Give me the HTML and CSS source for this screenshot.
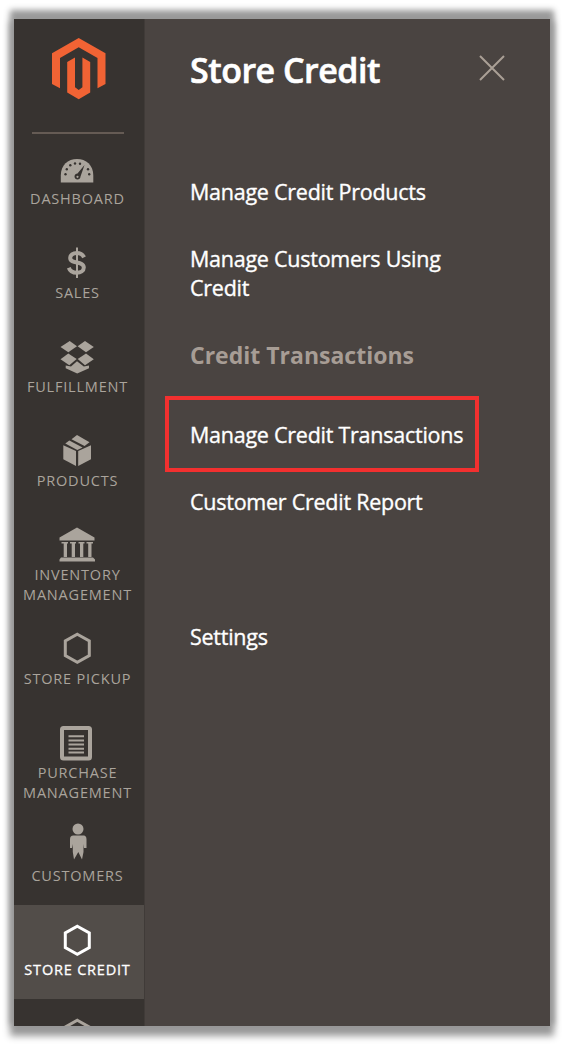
FILE: index.html
```html
<!DOCTYPE html>
<html lang="en">
<head>
<meta charset="utf-8">
<title>Store Credit</title>
<link rel="stylesheet" href="styles.css">
</head>
<body>
<div class="admin">
  <nav class="sidebar">
    <div class="brand">
      <svg class="logo" viewBox="0 0 54 62"><path d="M26.7 0 53.500 15.300V46L45.500 50.300V20L26.700 9.200 8 20V50.300L0 46V15.300Z"/><path d="M15.200 24 23 19.500V49.300L26.700 52 30.400 49.300V19.500L38.200 24V54.600L26.700 61.200 15.200 54.600Z"/></svg>
    </div>
    <a class="item"><svg class="icon" viewBox="0 0 44 40"><path d="M5.800 33.500V26.500C5.800 16 13 10 22 10S38.300 16 38.300 26.500V33.500Z"/><g class="cut"><circle cx="10.500" cy="25.300" r="1.200"/><circle cx="11.800" cy="20.200" r="1.200"/><circle cx="15.300" cy="16.300" r="1.200"/><circle cx="20" cy="14.500" r="1.200"/><circle cx="25" cy="14.800" r="1.200"/><circle cx="33" cy="20.200" r="1.200"/><circle cx="34.200" cy="25.300" r="1.200"/><path d="M29.500 16 25.500 27.500C25.500 31.500 19.500 31.500 19.500 27.500 19.500 25.500 21 24.500 22.500 24.500Z"/></g><circle cx="22.500" cy="27.800" r="1.100"/></svg><span class="label">DASHBOARD</span></a>
    <a class="item"><svg class="icon line" viewBox="0 0 44 40"><path d="M29 14.300C27.500 11.200 24.500 10 21.800 10 18 10 15.200 12 15.200 15 15.200 21.500 28.800 17.500 28.800 24.500 28.800 28 25.500 29.800 21.800 29.800 17.800 29.800 15 28 13.800 24.700" stroke-width="4"/><path d="M22 4.500V35" stroke-width="2"/></svg><span class="label">SALES</span></a>
    <a class="item"><svg class="icon" viewBox="0 0 44 40"><path d="M14.700 4 22 9.300 13.300 15.200 5.500 9.900Z"/><path d="M30 4 38.800 9.900 31 15.200 22.600 9.300Z"/><path d="M13.300 16.500 21.700 22 14.300 28.200 5.500 22.300Z"/><path d="M31 16.500 38.800 22.300 30 28.200 22.700 22Z"/><path d="M22 24.200 28.800 29.500 34 28.600V31.200L22.200 36.500 10.700 31.200V28.600L16 29.500Z"/></svg><span class="label">FULFILLMENT</span></a>
    <a class="item"><svg class="icon" viewBox="0 0 44 40"><path d="M8.300 14.300 21 20V35L8.300 28.300Z"/><path d="M36 14.300 23.200 20V35L36 28.300Z"/><path d="M10.300 12.400 14.300 9.600 27.600 16.500 22.300 18.900Z"/><path d="M16.500 8.200 22 4 34.500 11.300 29.600 14.900Z"/></svg><span class="label">PRODUCTS</span></a>
    <a class="item"><svg class="icon" viewBox="0 0 44 40"><path d="M22 2.500 39.500 12.500V15.500H4.500V12.500ZM6.500 17H13V18.500H12V32H8.700V18.500H6.500ZM15 17H21V18.500H20V32H16.700V18.500H15ZM23.500 17H29.500V18.500H28.300V32H25V18.500H23.500ZM31.500 17H38V18.500H36.500V32H33.200V18.500H31.500ZM6 32.500H38L40 34.500V36.500H4.500V34.500Z"/></svg><span class="label">INVENTORY<br>MANAGEMENT</span></a>
    <a class="item"><svg class="icon line" viewBox="0 0 44 40"><path d="M22.300 5.300 34.300 12V26.500L22.300 33.200 10.300 26.500V12Z" stroke-width="3"/></svg><span class="label">STORE PICKUP</span></a>
    <a class="item"><svg class="icon line" viewBox="0 0 44 40"><rect x="7" y="5" width="28" height="30.500" rx="1.500" stroke-width="4"/><path d="M13.500 13.200H29M13.500 17.400H29M13.500 21.600H29M13.500 25.800H29M13.500 29.500H29" stroke-width="2"/></svg><span class="label">PURCHASE<br>MANAGEMENT</span></a>
    <a class="item"><svg class="icon" viewBox="0 5 44 40"><circle cx="23" cy="8" r="5.500"/><path d="M18.500 14.500H28C31 14.500 31.500 16.500 31.500 18.500V27H29L28.500 23V31L27 38.500 23.300 31 19 38.500 17.800 31V23L17 27H15V18.500C15 16 16 14.500 18.500 14.500Z"/></svg><span class="label">CUSTOMERS</span></a>
    <a class="item active"><svg class="icon line" viewBox="0 0 44 40"><path d="M22.300 6.300 34.300 13V27.500L22.300 34.200 10.300 27.500V13Z" stroke-width="3"/></svg><span class="label">STORE CREDIT</span></a>
    <a class="item"><svg class="icon line" viewBox="0 0 44 40"><path d="M22.300 6.300 34.300 13V27.500L22.300 34.200 10.300 27.500V13Z" stroke-width="3"/></svg></a>
  </nav>
  <main class="panel">
    <header class="head"><h1 class="title">Store Credit</h1><svg class="close" viewBox="0 0 26 26"><path d="M1 1 25 25M25 1 1 25"/></svg></header>
    <a class="link products">Manage Credit Products</a>
    <a class="link customers">Manage Customers Using<br>Credit</a>
    <h2 class="group">Credit Transactions</h2>
    <a class="link marked">Manage Credit Transactions</a>
    <a class="link report">Customer Credit Report</a>
    <a class="link">Settings</a>
  </main>
</div>
</body>
</html>
```
FILE: styles.css
```css
body {
  margin: 0;
  padding: 19px 15px 20px 14px;
  background: #fff;
  font-family: "Open Sans", "Noto Sans", sans-serif;
  overflow: hidden;
}
.admin {
  display: flex;
  height: 1007px;
  background: #4a4441;
  box-shadow: 0 -5px 6px 4px #999, 0 6px 7px 4px #999;
}
.sidebar {
  box-sizing: border-box;
  width: 131px;
  height: 1007px;
  overflow: hidden;
  background: #373330;
  border-right: 1px solid #403b38;
}
.brand {
  box-sizing: border-box;
  width: 92px;
  height: 115px;
  margin-left: 18px;
  padding: 19px 0 0 20px;
  border-bottom: 2px solid #655b54;
}
.logo {
  display: block;
  width: 54px;
  height: 62px;
  fill: #f16334;
}
.item {
  box-sizing: border-box;
  display: flex;
  flex-direction: column;
  align-items: center;
  height: 94px;
  padding: 15px 4px 0 0;
  color: #aaa49c;
}
.item:has(br) {
  height: 103.500px;
}
.active {
  color: #fff;
  background: #524d49;
}
.active .label {
  -webkit-text-stroke: .3px currentColor;
}
.icon {
  flex: none;
  width: 44px;
  height: 40px;
  overflow: visible;
  fill: currentColor;
}
.line {
  fill: none;
  stroke: currentColor;
}
.cut {
  fill: #373330;
}
.label {
  padding-left: 1px;
  font-size: 14.500px;
  line-height: 20px;
  letter-spacing: .8px;
  text-align: center;
  white-space: nowrap;
}
.panel {
  display: flex;
  flex: 1;
  flex-direction: column;
  align-items: flex-start;
  padding: 28px 45px 0;
}
.head {
  display: flex;
  align-self: stretch;
  justify-content: space-between;
  height: 130px;
}
.title {
  margin: 0;
  font-size: 34px;
  font-weight: 600;
  line-height: 46px;
  letter-spacing: -.5px;
  color: #fff;
  -webkit-text-stroke: .6px currentColor;
}
.close {
  width: 26px;
  height: 26px;
  margin-top: 8px;
  fill: none;
  stroke: #aaa096;
  stroke-width: 2;
}
.link {
  font-size: 21.500px;
  line-height: 29px;
  letter-spacing: -.25px;
  color: #fff;
  white-space: nowrap;
  -webkit-text-stroke: .35px currentColor;
}
.products,
.customers {
  margin-bottom: 38px;
}
.group {
  margin: 0 0 26px;
  font-size: 23px;
  font-weight: 700;
  line-height: 30px;
  color: #a79d95;
}
.marked {
  box-sizing: border-box;
  width: 314px;
  height: 76px;
  margin-left: -25px;
  padding: 20px 0 0 21px;
  border: 4px solid #f2302f;
}
.report {
  margin: 15px 0 106px;
}
```
